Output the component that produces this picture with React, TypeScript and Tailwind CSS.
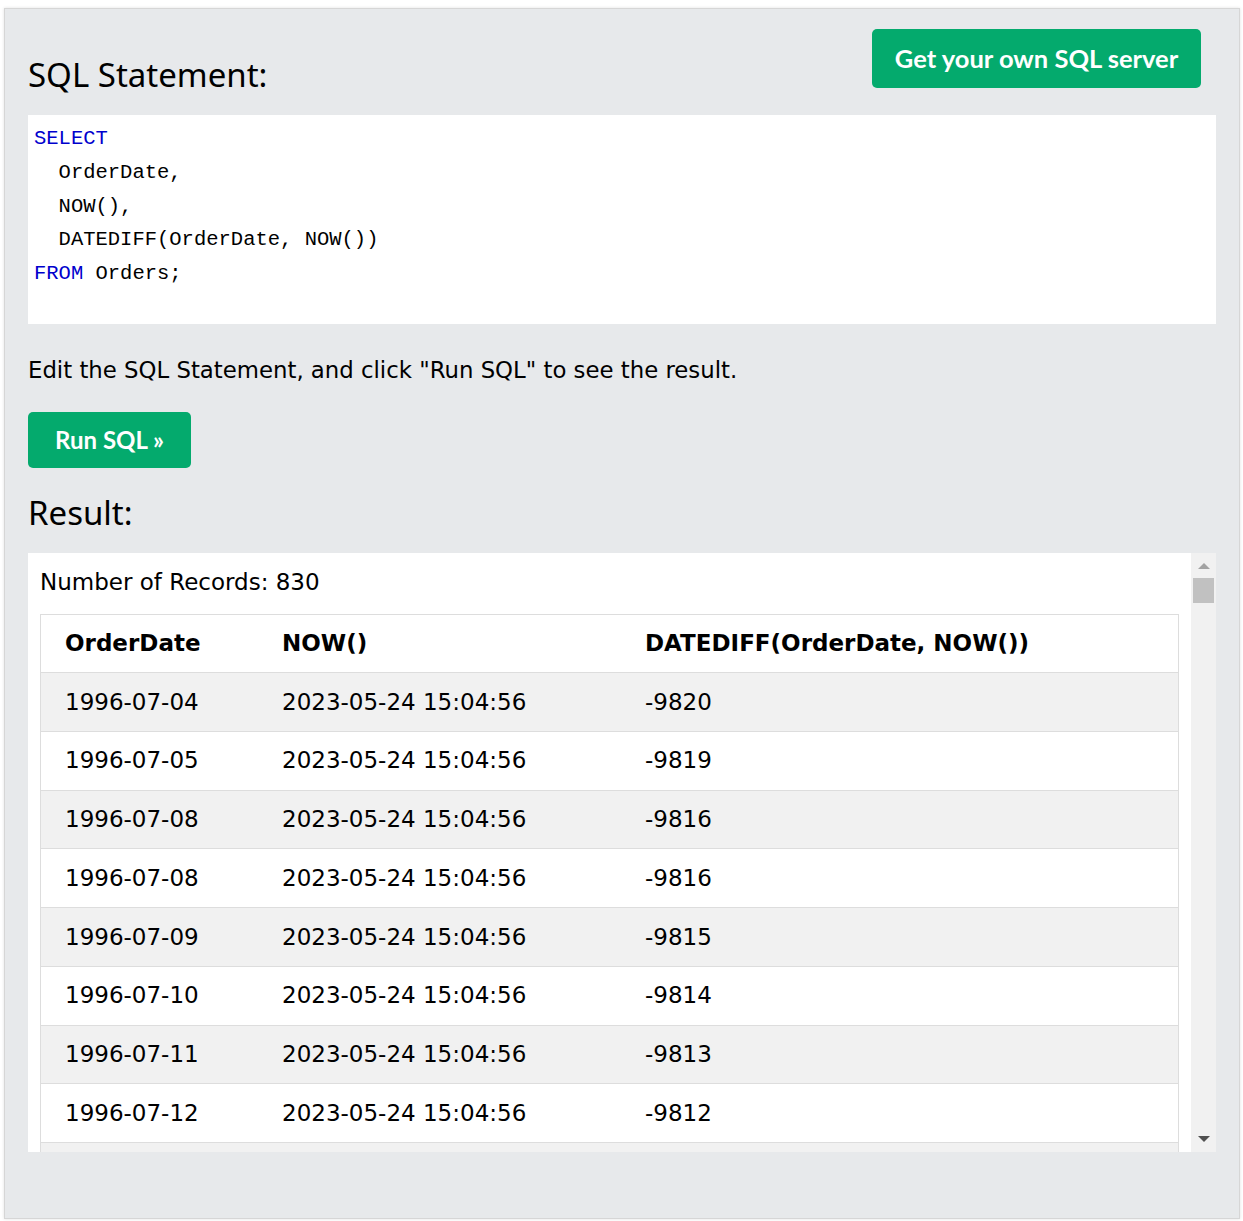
import React from "react";

const rows = [
  ["1996-07-04", "2023-05-24 15:04:56", "-9820"],
  ["1996-07-05", "2023-05-24 15:04:56", "-9819"],
  ["1996-07-08", "2023-05-24 15:04:56", "-9816"],
  ["1996-07-08", "2023-05-24 15:04:56", "-9816"],
  ["1996-07-09", "2023-05-24 15:04:56", "-9815"],
  ["1996-07-10", "2023-05-24 15:04:56", "-9814"],
  ["1996-07-11", "2023-05-24 15:04:56", "-9813"],
  ["1996-07-12", "2023-05-24 15:04:56", "-9812"],
  ["1996-07-15", "2023-05-24 15:04:56", "-9809"],
];

const sans = { fontFamily: '"Noto Sans", "Open Sans", sans-serif' };
const btnFont = { fontFamily: 'Lato, "Open Sans", sans-serif' };
const mono = { fontFamily: '"Liberation Mono", "DejaVu Sans Mono", monospace' };
const verdana = { fontFamily: '"DejaVu Sans", Verdana, sans-serif' };

export default function App() {
  return (
    <div className="bg-white min-h-[1221px] pt-[8px] pl-[4px] pr-[3px] pb-[1px]">
      <div className="bg-[#e7e9eb] border border-[#d6d6d6] shadow-[0_0_3px_rgba(0,0,0,0.12)] px-[23px] pb-[66px] text-black">
        {/* header */}
        <div className="flex justify-between h-[106px]">
          <h2 className="text-[33px] leading-[46px] pt-[43px] font-normal" style={sans}>
            SQL Statement:
          </h2>
          <button
            className="mt-[20px] mr-[15px] h-[59px] w-[329px] rounded-[5px] bg-[#04AA6D] text-white text-[25.5px] font-bold"
            style={btnFont}
          >
            Get your own SQL server
          </button>
        </div>

        {/* code */}
        <div className="bg-white h-[209px] pt-[7px] pl-[6px] text-[20.5px] leading-[33.75px]" style={mono}>
          <div className="text-[#0000cd]">SELECT</div>
          <div>&nbsp;&nbsp;OrderDate,</div>
          <div>&nbsp;&nbsp;NOW(),</div>
          <div>&nbsp;&nbsp;DATEDIFF(OrderDate, NOW())</div>
          <div>
            <span className="text-[#0000cd]">FROM</span> Orders;
          </div>
        </div>

        <p className="mt-[29px] text-[22.8px] leading-[34px]" style={verdana}>
          Edit the SQL Statement, and click "Run SQL" to see the result.
        </p>

        <button
          className="mt-[25px] h-[56px] w-[163px] rounded-[5px] bg-[#04AA6D] text-white text-[24px] font-bold"
          style={btnFont}
        >
          Run SQL »
        </button>

        <h2 className="mt-[22px] text-[33px] leading-[46px] font-normal" style={sans}>
          Result:
        </h2>

        {/* result box */}
        <div className="mt-[17px] bg-white h-[599px] flex overflow-hidden">
          <div className="flex-1 overflow-hidden px-[12px]">
            <div className="h-[61px] pt-[12px] text-[23px] leading-[34px]" style={verdana}>
              Number of Records: 830
            </div>
            <div className="border border-[#dddddd]" style={verdana}>
              <div className="flex h-[58px] items-center font-bold text-[23px] border-b border-[#dddddd]">
                <div className="w-[217px] pl-[24px]">OrderDate</div>
                <div className="w-[363px] pl-[24px]">NOW()</div>
                <div className="flex-1 pl-[24px]">DATEDIFF(OrderDate, NOW())</div>
              </div>
              {rows.map((r, i) => (
                <div
                  key={i}
                  className={
                    "flex h-[58.75px] items-center text-[23px] border-b border-[#dddddd] " +
                    (i % 2 === 0 ? "bg-[#f1f1f1]" : "bg-white")
                  }
                >
                  <div className="w-[217px] pl-[24px]">{r[0]}</div>
                  <div className="w-[363px] pl-[24px]">{r[1]}</div>
                  <div className="flex-1 pl-[24px]">{r[2]}</div>
                </div>
              ))}
            </div>
          </div>
          {/* scrollbar */}
          <div className="w-[25px] bg-[#f1f1f1] flex flex-col items-center relative">
            <div className="mt-[10px] w-0 h-0 border-l-[6px] border-r-[6px] border-b-[6px] border-l-transparent border-r-transparent border-b-[#a3a3a3]" />
            <div className="mt-[9px] w-[21px] h-[25px] bg-[#c1c1c1]" />
            <div className="absolute bottom-[10px] w-0 h-0 border-l-[6px] border-r-[6px] border-t-[6px] border-l-transparent border-r-transparent border-t-[#505050]" />
          </div>
        </div>
      </div>
    </div>
  );
}
